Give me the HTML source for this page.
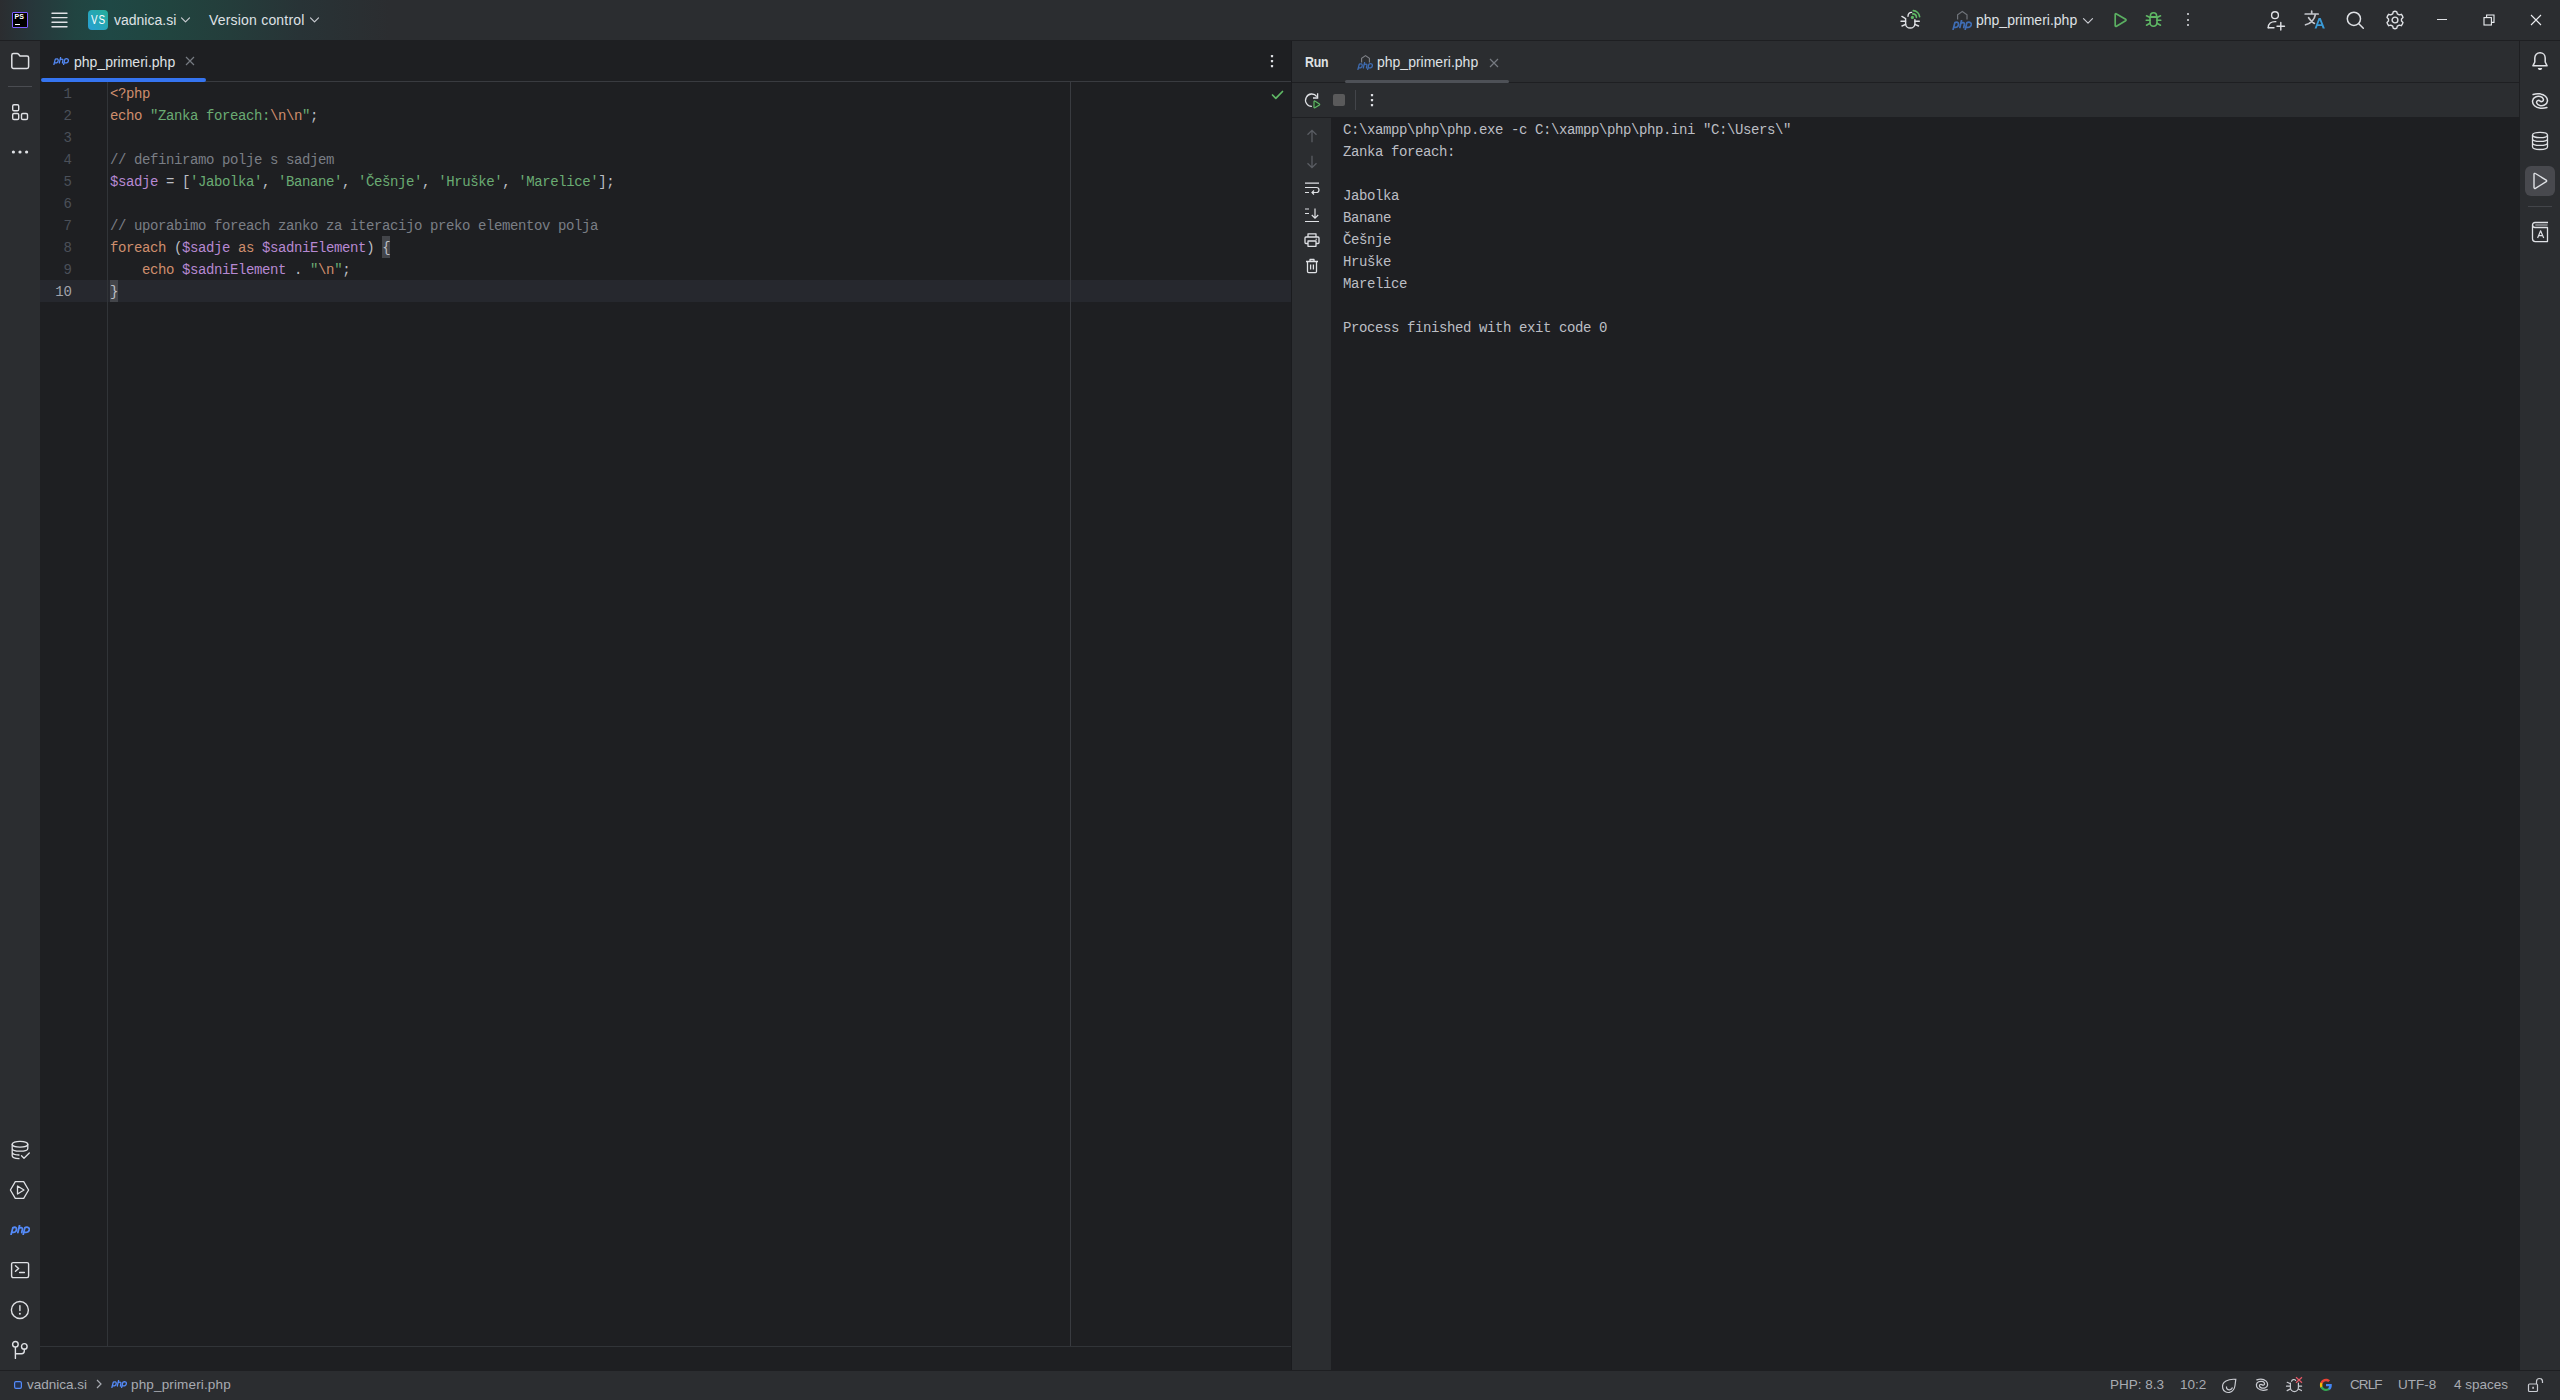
<!DOCTYPE html>
<html><head><meta charset="utf-8">
<style>
*{box-sizing:border-box}
html,body{margin:0;padding:0;width:2560px;height:1400px;overflow:hidden;background:#1e1f22;font-family:"Liberation Sans",sans-serif}
.a{position:absolute}
.ui{font-family:"Liberation Sans",sans-serif;font-size:14px;color:#dfe1e5;white-space:nowrap;line-height:14px}
.mono{font-family:"Liberation Mono",monospace;font-size:14px;letter-spacing:-0.4px;white-space:pre;line-height:22px}
svg{position:absolute;overflow:visible}
.ic{fill:none;stroke:#ced0d6;stroke-width:1.3;stroke-linecap:round;stroke-linejoin:round}
.k{color:#cf8e6d}.s{color:#6aab73}.c{color:#7a7e85}.v{color:#b789d2}.d{color:#bcbec4}
.php{font-family:"Liberation Sans",sans-serif;font-weight:bold;font-style:italic;color:#548af7;font-size:11px;line-height:11px;letter-spacing:-0.3px}
</style></head><body>

<svg width="0" height="0" style="position:absolute"><defs><symbol id="phpl" viewBox="0 0 16 8"><g fill="none" stroke="currentColor" stroke-linecap="round" stroke-linejoin="round">
<path d="M2.3 2.1L0.9 7.5M2.3 2.3C3.8 1.3 5.4 1.8 5.2 3.7C5 5.6 3.4 6.2 1.7 5.7"/>
<path d="M7.6 0.4L6.3 6M7.1 2.7C8.1 1.8 10.1 1.7 9.9 3.3L9.4 6"/>
<path d="M11.9 2.1L10.6 7.5M11.9 2.3C13.3 1.3 15.6 1.6 15.4 3.7C15.1 5.6 13.6 6.2 11.4 5.7"/>
</g></symbol></defs></svg>
<!-- TITLE BAR -->
<div class="a" id="title" style="left:0;top:0;width:2560px;height:40px;background:linear-gradient(90deg,#2b2d30 0px,#27363a 30px,#214441 75px,#1f4845 110px,#21443f 170px,#243d3b 230px,#283336 300px,#2b2d30 390px)"></div>
<div class="a" style="left:0;top:40px;width:2560px;height:1px;background:#1e1f22"></div>


<!-- PS logo -->
<div class="a" style="left:12px;top:12px;width:16px;height:16px;background:#000;border:1.3px solid #7b5cff;border-radius:1px"></div>
<div class="a" style="left:14.5px;top:13px;font:bold 7px/8px 'Liberation Sans';color:#fff;letter-spacing:0px">PS</div>
<div class="a" style="left:15px;top:23.5px;width:5px;height:1.3px;background:#fff"></div>
<!-- hamburger -->
<svg style="left:51px;top:12px" width="17" height="16" viewBox="0 0 17 16"><path class="ic" style="stroke:#dfe1e5;stroke-width:1.4" d="M1 1.2H16M1 5.6H16M1 10.2H16M1 14.8H16"/></svg>
<!-- VS badge -->
<div class="a" style="left:88px;top:10px;width:20px;height:20px;border-radius:4px;background:linear-gradient(to top right,#28a0d6,#25ac98)"></div>
<div class="a" style="left:90.5px;top:10px;width:20px;height:20px;font:13px/20px 'Liberation Sans';color:#fff;letter-spacing:1.2px;transform:scaleX(0.76);transform-origin:0 0">VS</div>
<div class="a ui" style="left:114px;top:13px">vadnica.si</div>
<svg style="left:181px;top:17px" width="9" height="6" viewBox="0 0 9 6"><path class="ic" style="stroke:#c9cbd1;stroke-width:1.2" d="M0.5 0.8L4.5 4.8L8.5 0.8"/></svg>
<div class="a ui" style="left:209px;top:13px;letter-spacing:0.2px">Version control</div>
<svg style="left:310px;top:17px" width="9" height="6" viewBox="0 0 9 6"><path class="ic" style="stroke:#c9cbd1;stroke-width:1.2" d="M0.5 0.8L4.5 4.8L8.5 0.8"/></svg>


<!-- title right -->
<svg style="left:1900px;top:10px" width="21" height="19" viewBox="0 0 21 19"><g fill="none" stroke="#dfe1e5" stroke-width="1.4" stroke-linecap="round">
<path d="M5.6 9V13.4A4.65 4.65 0 0 0 14.9 13.4V9.6"/><path d="M8 6.2C8 3.8 9.8 2.2 11.6 2.4"/><path d="M1.9 6.4L5.6 8.6M1 11.2H5.6M2 16L5.6 14.4M14.9 11.2H19.3M14.9 14.4L18.5 16"/></g>
<g fill="none" stroke="#5fb865" stroke-width="1.7" stroke-linecap="round"><path d="M12.8 3.9A3.6 3.6 0 0 1 16.4 7.3"/><path d="M13.3 0.7A6.8 6.8 0 0 1 19.6 6.6"/></g><circle cx="12.4" cy="7.4" r="1.6" fill="#5fb865"/></svg>
<svg style="left:1957px;top:11px" width="11" height="9" viewBox="0 0 11 9"><path d="M0.6 8.5V3.8L5.3 0.6L10 3.8V8.5" fill="none" stroke="#6f737a" stroke-width="1.2"/></svg>
<svg style="left:1952px;top:20px;color:#3f6db3" width="20" height="10" stroke-width="1.4"><use href="#phpl"/></svg>
<div class="a ui" style="left:1976px;top:13px">php_primeri.php</div>
<svg style="left:2083px;top:18px" width="10" height="6" viewBox="0 0 10 6"><path class="ic" style="stroke:#c9cbd1;stroke-width:1.2" d="M0.5 0.6L5 5.1L9.5 0.6"/></svg>
<svg style="left:2113px;top:12px" width="15" height="16" viewBox="0 0 15 16"><path d="M2.2 2.6C2.2 1.9 2.9 1.5 3.5 1.9L12.6 7.3C13.2 7.7 13.2 8.4 12.6 8.8L3.5 14.2C2.9 14.6 2.2 14.2 2.2 13.5Z" fill="none" stroke="#5bb062" stroke-width="1.7" stroke-linejoin="round"/></svg>
<svg style="left:2145px;top:12px" width="17" height="16" viewBox="0 0 17 16"><g fill="none" stroke="#5fb865" stroke-width="1.6" stroke-linecap="round">
<path d="M5.4 4.8V3.8A3.1 3.1 0 0 1 11.6 3.8V4.8Z"/><path d="M5 5.2H12V10.8A3.5 3.5 0 0 1 5 10.8Z"/><path d="M1.2 8.2H5M12 8.2H15.8M1.5 3.8L5 5.5M15.5 3.8L12 5.5M1.5 13.2L5 11.2M15.5 13.2L12 11.2"/></g></svg>
<div class="a" style="left:2187px;top:13.2px;width:2.2px;height:2.2px;background:#dfe1e5;border-radius:1px"></div>
<div class="a" style="left:2187px;top:19px;width:2.2px;height:2.2px;background:#dfe1e5;border-radius:1px"></div>
<div class="a" style="left:2187px;top:24.2px;width:2.2px;height:2.2px;background:#dfe1e5;border-radius:1px"></div>
<!-- add user -->
<svg style="left:2267px;top:11px" width="20" height="20" viewBox="0 0 20 20"><g class="ic" style="stroke:#dfe1e5;stroke-width:1.4">
<circle cx="8" cy="4.2" r="3.4"/><path d="M1.2 16.8C1.2 12.5 4 10.4 8.8 10.6"/><path d="M1.2 16.8H7"/><path d="M13.8 11.5V19M10 15.3H17.5"/></g></svg>
<!-- translate -->
<svg style="left:2304px;top:10px" width="22" height="20" viewBox="0 0 22 20"><g fill="none" stroke="#c4c6cc" stroke-width="1.7" stroke-linecap="round">
<path d="M1.2 4H14.2M7.7 1.2V3.6M11.4 4.3C10.5 9.5 7 13.2 1.5 14.8M4.6 7.7C6.2 10.3 8.2 12.2 10.4 13.4"/></g>
<path d="M10.6 18.6L14.6 8.1H16.7L20.9 18.6H18.7L17.8 16.1H13.5L12.6 18.6ZM14.1 14.3H17.2L15.65 10.2Z" fill="#3a9ad6" fill-rule="evenodd"/></svg>
<!-- search -->
<svg style="left:2346px;top:11px" width="20" height="20" viewBox="0 0 20 20"><g class="ic" style="stroke:#dfe1e5;stroke-width:1.5"><circle cx="7.9" cy="7.8" r="6.6"/><path d="M12.8 12.7L17.3 17.3"/></g></svg>
<!-- gear -->
<svg style="left:2385px;top:10px" width="20" height="20" viewBox="0 0 20 20"><g class="ic" style="stroke:#dfe1e5;stroke-width:1.4">
<path d="M8.2 1.8C9.2 1.2 10.8 1.2 11.8 1.8L12.3 3.8L14.3 4.9L16.3 4.3C17 5.1 17.8 6.5 18 7.6L16.5 9V11L18 12.4C17.8 13.5 17 14.9 16.3 15.7L14.3 15.1L12.3 16.2L11.8 18.2C10.8 18.8 9.2 18.8 8.2 18.2L7.7 16.2L5.7 15.1L3.7 15.7C3 14.9 2.2 13.5 2 12.4L3.5 11V9L2 7.6C2.2 6.5 3 5.1 3.7 4.3L5.7 4.9L7.7 3.8Z"/><circle cx="10" cy="10" r="2.9"/></g></svg>
<!-- window controls -->
<div class="a" style="left:2437px;top:19px;width:10px;height:1.2px;background:#dfe1e5"></div>
<svg style="left:2483px;top:14px" width="12" height="12" viewBox="0 0 12 12"><g fill="none" stroke="#eceef2" stroke-width="1.1"><rect x="1" y="3.6" width="7.4" height="7.4"/><path d="M3.6 3.6V1H11V8.4H8.4"/></g></svg>
<svg style="left:2530px;top:14px" width="12" height="12" viewBox="0 0 12 12"><path d="M1 1L11 11M11 1L1 11" stroke="#eceef2" stroke-width="1.1"/></svg>

<!-- LEFT TOOLBAR -->
<div class="a" style="left:0;top:41px;width:40px;height:1329px;background:#2b2d30"></div>
<!-- EDITOR -->
<div class="a" style="left:40px;top:41px;width:1251px;height:1329px;background:#1e1f22"></div>

<!-- left toolbar icons -->
<svg style="left:10px;top:52px" width="20" height="18" viewBox="0 0 20 18"><path class="ic" style="stroke:#dfe1e5;stroke-width:1.5" d="M1.8 3.2C1.8 2.2 2.5 1.6 3.5 1.6H7.2C7.8 1.6 8.2 1.9 8.6 2.3L10 4H17C18 4 18.6 4.6 18.6 5.6V14.8C18.6 15.8 18 16.4 17 16.4H3.5C2.5 16.4 1.8 15.8 1.8 14.8Z"/></svg>
<div class="a" style="left:8px;top:86px;width:24px;height:1px;background:#4a4c51"></div>
<svg style="left:10px;top:102px" width="20" height="20" viewBox="0 0 20 20"><g class="ic" style="stroke:#dfe1e5;stroke-width:1.4"><rect x="2.7" y="2.7" width="6" height="6" rx="1.3"/><rect x="2.7" y="11.5" width="6" height="6" rx="1.3"/><rect x="11.5" y="11.5" width="6" height="6" rx="1.3"/></g></svg>
<svg style="left:10px;top:146px" width="20" height="10" viewBox="0 0 20 10"><g fill="#dfe1e5"><circle cx="3.4" cy="6" r="1.6"/><circle cx="10" cy="6" r="1.6"/><circle cx="16.6" cy="6" r="1.6"/></g></svg>

<svg style="left:10px;top:1140px" width="22" height="21" viewBox="0 0 22 21"><g class="ic" style="stroke:#dfe1e5;stroke-width:1.3">
<ellipse cx="10" cy="4.2" rx="7.8" ry="2.9"/><path d="M2.2 4.2V15.8C2.2 17.3 5 18.5 9 18.7M17.8 4.2V8.5C17.8 10 14.5 11.2 10 11.2C5.5 11.2 2.2 10 2.2 8.5M2.2 12.2C2.2 13.7 5 14.8 9 15"/><path d="M11.5 15.8L14 18.3L19.3 13"/></g></svg>
<svg style="left:9px;top:1180px" width="22" height="20" viewBox="0 0 22 20"><g class="ic" style="stroke:#dfe1e5;stroke-width:1.3">
<path d="M6.3 1.6H14.7L19.6 10L14.7 18.4H6.3L1.4 10Z"/><path d="M8.5 6V14L15 10Z"/></g></svg>
<svg style="left:10px;top:1225px;color:#548af7" width="20" height="10" stroke-width="1.45"><use href="#phpl"/></svg>
<svg style="left:10px;top:1261px" width="20" height="18" viewBox="0 0 20 18"><g class="ic" style="stroke:#dfe1e5;stroke-width:1.4"><rect x="1.6" y="1.6" width="17" height="15" rx="1.5"/><path d="M5.5 4.7L8.6 7.5L5.5 10.3M9.6 11.5H14.4"/></g></svg>
<svg style="left:10px;top:1300px" width="20" height="20" viewBox="0 0 20 20"><g class="ic" style="stroke:#dfe1e5;stroke-width:1.4"><circle cx="9.9" cy="10" r="8.5"/><path d="M9.9 5.8V10.6"/></g><circle cx="9.9" cy="13.8" r="1" fill="#dfe1e5"/></svg>
<svg style="left:10px;top:1340px" width="20" height="20" viewBox="0 0 20 20"><g class="ic" style="stroke:#dfe1e5;stroke-width:1.4"><circle cx="5.4" cy="4.3" r="2.8"/><circle cx="14.3" cy="6.4" r="2.8"/><path d="M5.4 7.1V18.4M5.4 13.7H11.5C13.2 13.7 14.3 12.6 14.3 11V9.2"/></g></svg>


<!-- editor tab -->
<svg style="left:53px;top:57px;color:#548af7" width="16" height="8" stroke-width="1.25"><use href="#phpl"/></svg>
<div class="a ui" style="left:74px;top:55px">php_primeri.php</div>
<svg style="left:185px;top:56px" width="10" height="10" viewBox="0 0 10 10"><path d="M1 1L9 9M9 1L1 9" stroke="#767a81" stroke-width="1.2"/></svg>
<div class="a" style="left:42px;top:81px;width:1249px;height:1px;background:#393b40"></div>
<div class="a" style="left:41px;top:78px;width:165px;height:4px;border-radius:2px;background:#3574f0"></div>
<svg style="left:1270px;top:54px" width="4" height="14" viewBox="0 0 4 14"><g fill="#dfe1e5"><rect x="0.9" y="1" width="2.2" height="2.2" rx="0.5"/><rect x="0.9" y="6" width="2.2" height="2.2" rx="0.5"/><rect x="0.9" y="11" width="2.2" height="2.2" rx="0.5"/></g></svg>
<!-- current line -->
<div class="a" style="left:40px;top:280px;width:1251px;height:22px;background:#26282e"></div>
<div class="a" style="left:382px;top:236px;width:8px;height:22px;background:#43454a"></div>
<div class="a" style="left:110px;top:280px;width:8px;height:22px;background:#43454a"></div>
<!-- gutter & margin lines -->
<div class="a" style="left:107px;top:82px;width:1px;height:1264px;background:#313438"></div>
<div class="a" style="left:1070px;top:82px;width:1px;height:1264px;background:#393b40"></div>
<div class="a" style="left:40px;top:1346px;width:1251px;height:1px;background:#313438"></div>
<!-- check -->
<svg style="left:1270px;top:89px" width="15" height="12" viewBox="0 0 15 12"><path d="M2.5 6L5.8 9.3L12.5 2.5" fill="none" stroke="#5fb865" stroke-width="1.7" stroke-linecap="round" stroke-linejoin="round"/></svg>
<!-- line numbers -->
<div class="a mono" id="lnums" style="left:40px;top:83px;width:32px;text-align:right;color:#4b5059;letter-spacing:0">1
2
3
4
5
6
7
8
9
<span style="color:#a1a3ab">10</span></div>
<!-- code -->
<div class="a mono d" id="code" style="left:110px;top:83px"><span class="k">&lt;?php</span>
<span class="k">echo</span> <span class="s">"Zanka foreach:</span><span class="k">\n\n</span><span class="s">"</span>;

<span class="c">// definiramo polje s sadjem</span>
<span class="v">$sadje</span> = [<span class="s">'Jabolka'</span>, <span class="s">'Banane'</span>, <span class="s">'Češnje'</span>, <span class="s">'Hruške'</span>, <span class="s">'Marelice'</span>];

<span class="c">// uporabimo foreach zanko za iteracijo preko elementov polja</span>
<span class="k">foreach</span> (<span class="v">$sadje</span> <span class="k">as</span> <span class="v">$sadniElement</span>) {
    <span class="k">echo</span> <span class="v">$sadniElement</span> . <span class="s">"</span><span class="k">\n</span><span class="s">"</span>;
}</div>

<!-- RUN PANEL -->
<div class="a" style="left:1291px;top:41px;width:1px;height:1329px;background:#1a1b1e"></div>
<div class="a" style="left:1292px;top:41px;width:1227px;height:41px;background:#2b2d30"></div>
<div class="a" style="left:1292px;top:82px;width:1227px;height:1px;background:#1e1f22"></div>
<div class="a" style="left:1292px;top:83px;width:1227px;height:34px;background:#2b2d30"></div>
<div class="a" style="left:1292px;top:117px;width:1227px;height:1px;background:#1e1f22"></div>
<div class="a" style="left:1292px;top:118px;width:39px;height:1252px;background:#2b2d30"></div>
<div class="a" style="left:1331px;top:118px;width:1188px;height:1252px;background:#1e1f22"></div>
<!-- RIGHT TOOLBAR -->
<div class="a" style="left:2519px;top:41px;width:1px;height:1329px;background:#1e1f22"></div>
<div class="a" style="left:2520px;top:41px;width:40px;height:1329px;background:#2b2d30"></div>
<!-- STATUS BAR -->
<div class="a" style="left:0;top:1370px;width:2560px;height:1px;background:#1e1f22"></div>
<div class="a" style="left:0;top:1371px;width:2560px;height:29px;background:#2b2d30"></div>


<!-- run header -->
<div class="a ui" style="left:1305px;top:55px;font-weight:bold;color:#dfe1e5;letter-spacing:-0.3px;transform:scaleX(0.88);transform-origin:0 0">Run</div>
<svg style="left:1361px;top:55px" width="9" height="8" viewBox="0 0 9 8"><path d="M0.6 7.5V3.4L4.5 0.6L8.4 3.4V7.5" fill="none" stroke="#7e8187" stroke-width="1.1"/></svg>
<svg style="left:1357px;top:62px;color:#3f6db3" width="16" height="8" stroke-width="1.25"><use href="#phpl"/></svg>
<div class="a ui" style="left:1377px;top:55px">php_primeri.php</div>
<svg style="left:1489px;top:58px" width="10" height="10" viewBox="0 0 10 10"><path d="M1 1L9 9M9 1L1 9" stroke="#767a81" stroke-width="1.2"/></svg>
<div class="a" style="left:1345px;top:80px;width:164px;height:3px;border-radius:2px;background:#4e5157"></div>
<!-- run toolbar -->
<svg style="left:1304px;top:92px" width="18" height="18" viewBox="0 0 18 18"><path d="M7.9 14.4A6.2 6.2 0 1 1 12.8 4.6" fill="none" stroke="#dfe1e5" stroke-width="1.3"/><path d="M13.6 1.2V6H9" fill="none" stroke="#dfe1e5" stroke-width="1.3"/><path d="M10 9.6C10 9.1 10.5 8.8 10.9 9.1L15.4 11.9C15.8 12.2 15.8 12.7 15.4 13L10.9 15.8C10.5 16.1 10 15.8 10 15.3Z" fill="#1f3624" stroke="#5fb865" stroke-width="1.2" stroke-linejoin="round"/></svg>
<div class="a" style="left:1333px;top:94px;width:12px;height:12px;border-radius:2px;background:#5a5a5b"></div>
<div class="a" style="left:1355px;top:90px;width:1px;height:20px;background:#43454a"></div>
<svg style="left:1370px;top:93px" width="4" height="14" viewBox="0 0 4 14"><g fill="#dfe1e5"><rect x="0.9" y="1" width="2.2" height="2.2" rx="0.5"/><rect x="0.9" y="6" width="2.2" height="2.2" rx="0.5"/><rect x="0.9" y="11" width="2.2" height="2.2" rx="0.5"/></g></svg>
<!-- console gutter icons -->
<svg style="left:1304px;top:128px" width="16" height="16" viewBox="0 0 16 16"><path d="M8 14.2V2.5M3.5 6.8L8 2.3L12.5 6.8" fill="none" stroke="#5a5d63" stroke-width="1.3"/></svg>
<svg style="left:1304px;top:154px" width="16" height="16" viewBox="0 0 16 16"><path d="M8 1.8V13.5M3.5 9.2L8 13.7L12.5 9.2" fill="none" stroke="#5a5d63" stroke-width="1.3"/></svg>
<svg style="left:1304px;top:181px" width="16" height="16" viewBox="0 0 16 16"><g fill="none" stroke="#dfe1e5" stroke-width="1.2"><path d="M1 2.2H15M1 6.5H12.5C14 6.5 15 7.5 15 9C15 10.5 14 11.5 12.5 11.5H8M10 9.5L8 11.5L10 13.5M1 11.5H5"/></g></svg>
<svg style="left:1304px;top:207px" width="16" height="16" viewBox="0 0 16 16"><g fill="none" stroke="#dfe1e5" stroke-width="1.2"><path d="M1 2H5M1 6.5H5M1 14.5H15M11 1.5V11M7.8 8L11 11.2L14.2 8"/></g></svg>
<svg style="left:1304px;top:232px" width="16" height="16" viewBox="0 0 16 16"><g fill="none" stroke="#dfe1e5" stroke-width="1.3" stroke-linejoin="round"><path d="M4 5V1.8H12V5"/><path d="M4 11.5H2C1.4 11.5 1 11.1 1 10.5V6C1 5.4 1.4 5 2 5H14C14.6 5 15 5.4 15 6V10.5C15 11.1 14.6 11.5 14 11.5H12"/><path d="M4 9H12V14.3H4Z"/></g><circle cx="12.2" cy="7.2" r="0.7" fill="#dfe1e5"/></svg>
<svg style="left:1304px;top:258px" width="16" height="16" viewBox="0 0 16 16"><g fill="none" stroke="#dfe1e5" stroke-width="1.3" stroke-linejoin="round"><path d="M2 3.5H14M6 3.3V1.5H10V3.3M3.5 3.5V13.5C3.5 14.2 3.9 14.6 4.6 14.6H11.4C12.1 14.6 12.5 14.2 12.5 13.5V3.5M6.6 6.5V11.5M9.4 6.5V11.5"/></g></svg>
<!-- console text -->
<div class="a mono d" id="console" style="left:1343px;top:119px">C:\xampp\php\php.exe -c C:\xampp\php\php.ini "C:\Users\"
Zanka foreach:

Jabolka
Banane
Češnje
Hruške
Marelice

Process finished with exit code 0</div>
<!-- right toolbar icons -->
<svg style="left:2530px;top:50px" width="20" height="22" viewBox="0 0 20 22"><path d="M2.9 15.8L4.8 12V7.9C4.8 4.9 7 2.8 10 2.8C13 2.8 15.2 4.9 15.2 7.9V12L17.1 15.8Z" fill="none" stroke="#dfe1e5" stroke-width="1.5" stroke-linejoin="round"/><path d="M7.8 17.9H12.2C12.2 19.1 11.2 20 10 20C8.8 20 7.8 19.1 7.8 17.9Z" fill="#dfe1e5"/></svg>
<svg style="left:2528px;top:88px" width="24" height="24" viewBox="0 0 24 24"><path d="M5.1 6.5C9 5.2 14.5 5.5 17.5 8.2C20.5 11 20 15.5 16.5 17C13.5 18.3 9.5 17.5 8.7 15C8 12.8 10.5 11.8 12 12.8M18.9 19.5C15 20.8 9.5 20.5 6.5 17.8C3.5 15 4 10.5 7.5 9C10.5 7.7 14.5 8.5 15.3 11C16 13.2 13.5 14.2 12 13.2" fill="none" stroke="#dfe1e5" stroke-width="1.5" stroke-linecap="round"/></svg>
<svg style="left:2531px;top:131px" width="18" height="21" viewBox="0 0 18 21"><g fill="none" stroke="#dfe1e5" stroke-width="1.3"><ellipse cx="9" cy="4" rx="7.5" ry="2.7"/><path d="M1.5 4V15.8C1.5 17.3 4.9 18.5 9 18.5C13.1 18.5 16.5 17.3 16.5 15.8V4M1.5 7.7C1.5 9.2 4.9 10.4 9 10.4C13.1 10.4 16.5 9.2 16.5 7.7M1.5 11.7C1.5 13.2 4.9 14.4 9 14.4C13.1 14.4 16.5 13.2 16.5 11.7"/></g></svg>
<div class="a" style="left:2525px;top:166px;width:30px;height:30px;border-radius:6px;background:#48494e"></div>
<svg style="left:2532px;top:172px" width="17" height="18" viewBox="0 0 17 18"><path d="M2 2.3C2 1.5 2.8 1.1 3.4 1.5L14.2 8.1C14.8 8.5 14.8 9.3 14.2 9.7L3.4 16.3C2.8 16.7 2 16.3 2 15.5Z" fill="none" stroke="#dfe1e5" stroke-width="1.4" stroke-linejoin="round"/></svg>
<div class="a" style="left:2528px;top:206px;width:24px;height:1px;background:#43454a"></div>
<svg style="left:2530px;top:220px" width="20" height="24" viewBox="0 0 20 24"><g fill="none" stroke="#dfe1e5" stroke-width="1.3" stroke-linejoin="round"><path d="M18 2.5H5C3.5 2.5 2.5 3.6 2.5 5V18.8C2.5 20.4 3.6 21.6 5.2 21.6H17.5V7.5H5C3.6 7.5 2.6 6.5 2.6 5.1"/><path d="M5.3 5H17.6" stroke="#a9abb0" stroke-width="1.2"/><path d="M7.6 18L10.6 10.8L13.7 18M8.8 15.6H12.5" stroke-width="1.2"/></g></svg>
<!-- status bar -->
<svg style="left:13px;top:1380px" width="10" height="10" viewBox="0 0 10 10"><rect x="1.6" y="1.6" width="6.8" height="6.8" rx="1.4" fill="#233252" stroke="#548af7" stroke-width="1.2"/></svg>
<div class="a ui" style="left:27px;top:1377.5px;color:#a8abb2;font-size:13.5px">vadnica.si</div>
<svg style="left:95px;top:1379px" width="8" height="10" viewBox="0 0 8 10"><path d="M2 1L6 5L2 9" fill="none" stroke="#a8abb2" stroke-width="1.2"/></svg>
<svg style="left:111px;top:1380px;color:#548af7" width="16" height="8" stroke-width="1.3"><use href="#phpl"/></svg>
<div class="a ui" style="left:131px;top:1377.5px;color:#a8abb2;font-size:13.5px;letter-spacing:0.15px">php_primeri.php</div>

<div class="a ui" style="left:2110px;top:1377.5px;color:#a8abb2;font-size:13.5px">PHP: 8.3</div>
<div class="a ui" style="left:2180px;top:1377.5px;color:#a8abb2;font-size:13.5px">10:2</div>
<svg style="left:2221px;top:1378px" width="17" height="16" viewBox="0 0 17 16"><g fill="none" stroke="#c9cbd1" stroke-width="1.2"><path d="M14.8 1.4C14.8 1.4 9 0.8 5 3C2 4.7 1 7.5 1.8 10.5C2.6 13.6 5.8 15 8.6 14.3C11.8 13.6 13.6 10.5 14 7.5C14.3 5 14.8 1.4 14.8 1.4Z"/><path d="M5.5 8.5C5.2 10.6 6.5 12 8.6 11.8C10.2 11.6 11.2 10.5 11.5 9.5"/></g></svg>
<svg style="left:2253px;top:1375px" width="18" height="18" viewBox="0 0 24 24"><path d="M5.1 6.5C9 5.2 14.5 5.5 17.5 8.2C20.5 11 20 15.5 16.5 17C13.5 18.3 9.5 17.5 8.7 15C8 12.8 10.5 11.8 12 12.8M18.9 19.5C15 20.8 9.5 20.5 6.5 17.8C3.5 15 4 10.5 7.5 9C10.5 7.7 14.5 8.5 15.3 11C16 13.2 13.5 14.2 12 13.2" fill="none" stroke="#c9cbd1" stroke-width="1.7" stroke-linecap="round"/></svg>
<svg style="left:2285px;top:1375px" width="19" height="18" viewBox="0 0 19 18"><g fill="none" stroke="#c9cbd1" stroke-width="1.2" stroke-linecap="round"><path d="M5.4 8V12.6A4 4 0 0 0 13.4 12.6V8.2M6.6 6.2C6.8 4.4 9.6 3.9 10.6 5.4M1.5 11.2H5.4M13.4 11.2H16.6M2.2 7.3L5.4 8.8M2.2 15.6L5.4 13.9M16.4 15.6L13.4 13.9"/></g><path d="M11 2.2L17 7.8M17 2.2L11 7.8" stroke="#e55765" stroke-width="1.2"/></svg>
<svg style="left:2319px;top:1378px" width="14" height="14" viewBox="0 0 14 14"><path d="M12.8 7.2C12.8 6.7 12.8 6.3 12.7 5.9H7V8.3H10.3C10.1 9.1 9.7 9.8 9 10.2V11.8H11C12.1 10.8 12.8 9.2 12.8 7.2Z" fill="#4285f4"/><path d="M7 13C8.7 13 10.1 12.4 11 11.8L9 10.2C8.5 10.6 7.8 10.8 7 10.8C5.4 10.8 4 9.7 3.5 8.2H1.5V9.8C2.5 11.8 4.6 13 7 13Z" fill="#34a853"/><path d="M3.5 8.2C3.4 7.8 3.3 7.4 3.3 7C3.3 6.6 3.4 6.2 3.5 5.8V4.2H1.5C1.1 5.1 0.9 6 0.9 7C0.9 8 1.1 8.9 1.5 9.8Z" fill="#fbbc05"/><path d="M7 3.2C7.9 3.2 8.7 3.5 9.3 4.1L11.1 2.3C10 1.3 8.6 0.7 7 0.7C4.6 0.7 2.5 2.2 1.5 4.2L3.5 5.8C4 4.3 5.4 3.2 7 3.2Z" fill="#ea4335"/></svg>
<div class="a ui" style="left:2350px;top:1377.5px;color:#a8abb2;font-size:13.5px;letter-spacing:-0.9px">CRLF</div>
<div class="a ui" style="left:2398px;top:1377.5px;color:#a8abb2;font-size:13.5px">UTF-8</div>
<div class="a ui" style="left:2454px;top:1377.5px;color:#a8abb2;font-size:13.5px">4 spaces</div>
<svg style="left:2527px;top:1377px" width="17" height="16" viewBox="0 0 17 16"><g fill="none" stroke="#c9cbd1" stroke-width="1.2"><rect x="1.5" y="7" width="9" height="7.5" rx="1"/><path d="M9.5 7V4.5C9.5 2.8 10.8 1.5 12.5 1.5C14.2 1.5 15.5 2.8 15.5 4.5V6"/></g><rect x="5.3" y="9.8" width="1.6" height="2" fill="#c9cbd1"/></svg>

</body></html>
